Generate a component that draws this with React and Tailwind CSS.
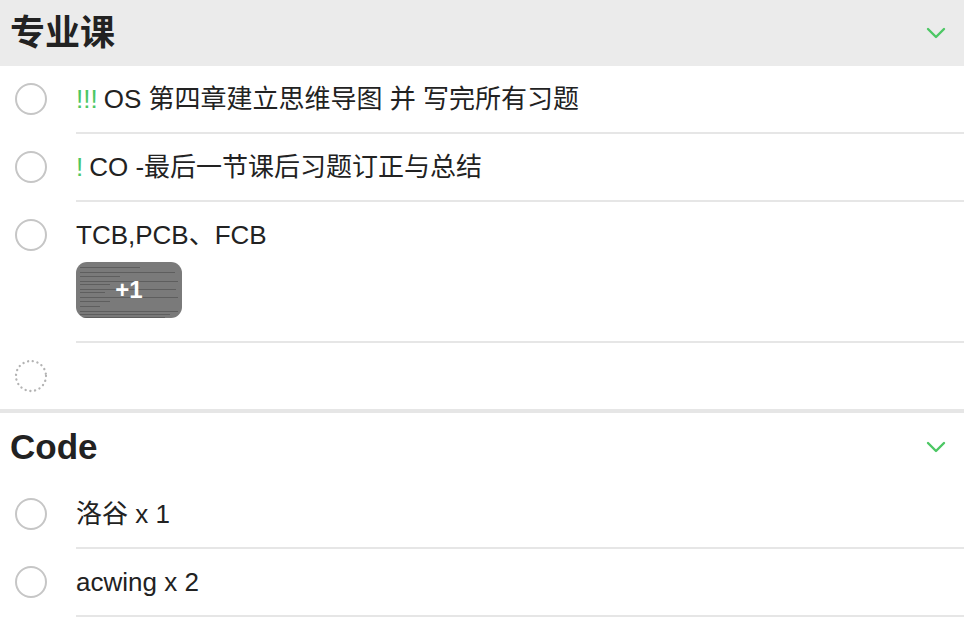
import React from "react";

const FONT = { fontFamily: '"Liberation Sans", "Noto Sans CJK SC", sans-serif' };

function Chevron() {
  return (
    <svg width="20" height="12" viewBox="0 0 20 12" className="mr-[18px]">
      <path d="M2 2 L10 10 L18 2" fill="none" stroke="#4cc764" strokeWidth="2.4" strokeLinecap="round" strokeLinejoin="round" />
    </svg>
  );
}

function Circle({ dotted }) {
  if (dotted) {
    return (
      <svg width="34" height="34" viewBox="0 0 34 34" className="shrink-0">
        <circle cx="17" cy="17" r="15" fill="none" stroke="#b3b3b3" strokeWidth="2.3" strokeDasharray="0.1 4.7" strokeLinecap="round" />
      </svg>
    );
  }
  return <div className="w-[32px] h-[32px] rounded-full border-2 border-[#c6c6c6] shrink-0" />;
}

function Row({ children, dotted, extra, last }) {
  return (
    <div className="flex">
      <div className="w-[76px] shrink-0 flex justify-start pl-[15px] pt-[17px]">
        {dotted ? <div className="-ml-[1px] -mt-[1px]"><Circle dotted /></div> : <Circle />}
      </div>
      <div className={"flex-1 " + (last ? "" : "border-b-2 border-[#e6e6e6]")}>
        <div className="h-[66px] flex items-center text-[26px] text-[#222]">{children}</div>
        {extra}
      </div>
    </div>
  );
}

function Badge() {
  const lines = [
    [4, 60], [10, 95], [16, 40], [22, 98], [26, 30], [32, 96], [36, 25], [42, 98], [48, 30], [54, 20], [60, 98], [64, 90], [68, 85],
  ];
  return (
    <div className="relative w-[106px] h-[56px] -mt-[6px] rounded-[11px] bg-[#7a7a7a] overflow-hidden mb-[23px]">
      {lines.map(([t, w], i) => (
        <div key={i} className="absolute left-[4px] h-[1px] bg-[#5e5e5e]" style={{ top: t * 0.78 + 2, width: w }} />
      ))}
      <div className="absolute inset-0 flex items-center justify-center text-white text-[24px] font-bold">+1</div>
    </div>
  );
}

export default function App() {
  return (
    <div className="w-[964px] h-[620px] bg-white overflow-hidden" style={FONT}>
      <div className="h-[66px] bg-[#ebebeb] flex items-center justify-between pl-[10px]">
        <div className="text-[35px] font-bold text-[#222]">专业课</div>
        <Chevron />
      </div>
      <Row>
        <span className="text-[#4cc764] mr-[6px]">!!!</span>OS 第四章建立思维导图 并 写完所有习题
      </Row>
      <Row>
        <span className="text-[#4cc764] mr-[6px]">!</span>CO -最后一节课后习题订正与总结
      </Row>
      <Row extra={<Badge />}>TCB,PCB、FCB</Row>
      <Row dotted last>{""}</Row>
      <div className="h-[4px] bg-[#e6e6e6]" />
      <div className="h-[68px] flex items-center justify-between pl-[10px]">
        <div className="text-[35px] font-bold text-[#222]">Code</div>
        <Chevron />
      </div>
      <Row>洛谷 x 1</Row>
      <Row>acwing x 2</Row>
    </div>
  );
}
